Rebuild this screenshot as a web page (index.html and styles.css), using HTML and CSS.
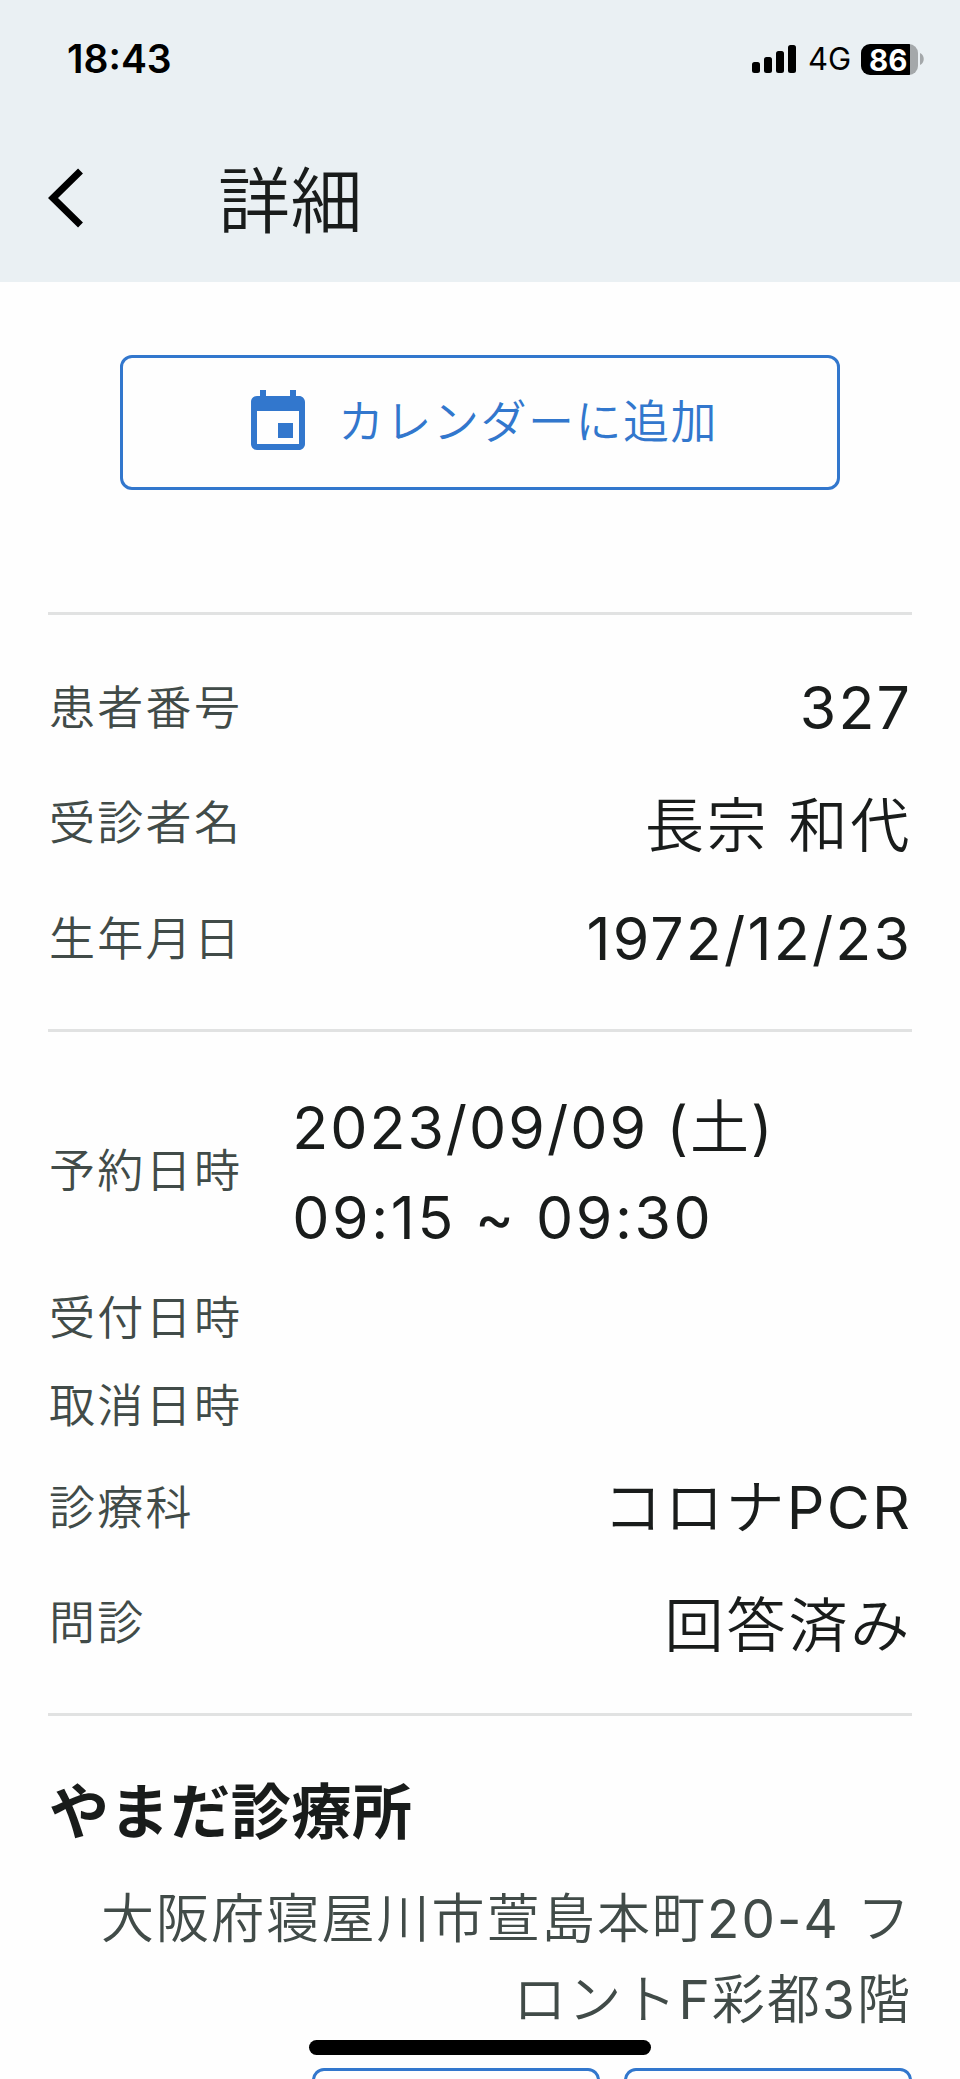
FILE: index.html
```
<!DOCTYPE html>
<html lang="ja">

<head>
     <meta charset="UTF-8">
     <meta name="viewport" content="width=device-width, initial-scale=1.0">
     <title>詳細</title>
     <link rel="stylesheet" href="styles.css">
</head>

<body>
     <div class="screen">
          <header class="header">
               <div class="status-bar">
                    <span class="time">18:43</span>
                    <div class="status-icons">
                         <svg class="signal" width="44" height="28" viewBox="0 0 44 28">
                              <rect x="0" y="17" width="8" height="11" rx="2.5" />
                              <rect x="12" y="12" width="8" height="16" rx="2.5" />
                              <rect x="24" y="6" width="8" height="22" rx="2.5" />
                              <rect x="36" y="0" width="8" height="28" rx="2.5" />
                         </svg>
                         <span class="network">4G</span>
                         <div class="battery"><span>86</span></div>
                         <svg class="battery-tip" width="4" height="12" viewBox="0 0 4 12">
                              <path d="M0 0c5 2 5 10 0 12z" />
                         </svg>
                    </div>
               </div>
               <div class="app-bar">
                    <svg class="back" width="36" height="60" viewBox="0 0 36 60">
                         <path d="M32.5 3L5 30l27.500 27" />
                    </svg>
                    <h1>詳細</h1>
               </div>
          </header>

          <main>
               <button class="calendar-btn">
                    <svg width="72" height="72" viewBox="0 0 24 24">
                         <path d="M17 12h-5v5h5v-5zM16 1v2H8V1H6v2H5c-1.110 0-1.990.9-1.990 2L3 19c0 1.100.890 2 2 2h14c1.100 0 2-.9 2-2V5c0-1.100-.9-2-2-2h-1V1h-2zm3 18H5V8h14v11z" />
                    </svg>
                    <span>カレンダーに追加</span>
               </button>

               <section class="patient">
                    <div class="row">
                         <span class="label">患者番号</span>
                         <span class="value num">327</span>
                    </div>
                    <div class="row">
                         <span class="label">受診者名</span>
                         <span class="value kanji">長宗<span class="num"> </span>和代</span>
                    </div>
                    <div class="row">
                         <span class="label">生年月日</span>
                         <span class="value num">1972/12/23</span>
                    </div>
               </section>

               <section class="visit">
                    <div class="row row-date">
                         <span class="label">予約日時</span>
                         <div class="value date">
                              <div class="day"><span class="num">2023/09/09 (</span>土<span class="num">)</span></div>
                              <div class="num">09:15 ~ 09:30</div>
                         </div>
                    </div>
                    <div class="row row-small">
                         <span class="label">受付日時</span>
                    </div>
                    <div class="row row-small">
                         <span class="label">取消日時</span>
                    </div>
                    <div class="row">
                         <span class="label">診療科</span>
                         <span class="value">コロナ<span class="num">PCR</span></span>
                    </div>
                    <div class="row">
                         <span class="label">問診</span>
                         <span class="value kanji">回答済み</span>
                    </div>
               </section>

               <section class="clinic">
                    <h2>やまだ診療所</h2>
                    <p class="address">大阪府寝屋川市萱島本町<span class="num">20-4 </span>フ<br>ロント<span class="num">F</span>彩都<span class="num">3</span>階</p>
                    <div class="clinic-actions">
                         <button></button>
                         <button></button>
                    </div>
               </section>
          </main>

          <div class="home-indicator"></div>
     </div>
</body>

</html>
```
FILE: styles.css
```
/* Base styles */
* {
     box-sizing: border-box;
}

body {
     margin: 0;
     background-color: #fefefe;
     color: #191c1b;
     font-family: Inter, "Noto Sans CJK JP", sans-serif;
     font-weight: 350;
}

.screen {
     position: relative;
     width: 960px;
     height: 2079px;
     overflow: hidden;
}

/* Latin letters and digits */
.num {
     font-weight: 400;
}

/* Status bar + title */
.header {
     height: 282px;
     background-color: #eaf0f3;
}

.status-bar {
     display: flex;
     justify-content: space-between;
     height: 118px;
     padding: 0 36px 0 67px;
     color: #000000;
     line-height: 118px;
}

.time {
     font-size: 39px;
     font-weight: 600;
}

.status-icons {
     display: flex;
     align-items: center;
}

.network {
     margin-left: 12px;
     width: 53px;
     font-size: 31px;
     font-weight: 400;
}

.battery {
     width: 57px;
     height: 31px;
     border-radius: 9px;
     background: linear-gradient(to right, #000000 49px, #a4a8aa 49px);
     color: #ffffff;
     font-size: 29.5px;
     font-weight: 700;
     line-height: 32px;
     padding-left: 8px;
}

.battery-tip {
     margin-left: 2px;
     fill: #a4a8aa;
}

.app-bar {
     display: flex;
     align-items: center;
     height: 160px;
     padding-left: 48px;
}

.back {
     fill: none;
     stroke: #000000;
     stroke-width: 7;
}

.app-bar h1 {
     margin: 0 0 0 134px;
     padding-top: 5px;
     font-size: 72px;
     font-weight: 350;
     letter-spacing: 0.5px;
     line-height: 100px;
}

/* Calendar button */
.calendar-btn {
     display: flex;
     justify-content: center;
     align-items: center;
     gap: 24px;
     width: 720px;
     height: 135px;
     margin: 73px auto 122px;
     padding: 0;
     border: 3px solid #3277cd;
     border-radius: 12px;
     background: none;
     color: #3277cd;
     font-family: inherit;
     font-size: 46px;
     font-weight: 350;
     letter-spacing: 1.5px;
}

.calendar-btn span {
     padding-bottom: 9px;
}

.calendar-btn svg {
     fill: #3277cd;
}

/* Sections */
section {
     margin: 0 48px;
     border-top: 3px solid #e1e2e2;
}

.patient {
     height: 417px;
     padding-top: 34px;
}

.visit {
     height: 684px;
     padding-top: 35px;
}

.row {
     display: flex;
     align-items: center;
     justify-content: space-between;
     height: 115.5px;
     padding: 0 2px 0 1px;
}

.row-date {
     height: 206px;
     justify-content: flex-start;
}

.row-small {
     height: 88px;
}

.label {
     padding-bottom: 6px;
     color: #414b48;
     font-size: 46px;
     letter-spacing: 2.3px;
}

.value {
     padding-top: 3px;
     font-size: 59px;
     letter-spacing: 2.2px;
     line-height: 90px;
     margin-right: -2.2px;
}

.kanji {
     padding-top: 7px;
     letter-spacing: 2.9px;
}

.date {
     padding-top: 6px;
     margin-left: 50px;
     letter-spacing: 2.6px;
}

.day {
     letter-spacing: 2px;
}

/* Clinic info */
.clinic h2 {
     margin: 46px 0 0;
     padding-left: 1px;
     font-size: 60px;
     font-weight: 700;
     letter-spacing: 0.6px;
     line-height: 100px;
}

.address {
     margin: 17px 0 0;
     color: #414b48;
     font-size: 53px;
     letter-spacing: 2.1px;
     line-height: 81px;
     text-align: right;
}

.clinic-actions {
     display: flex;
     justify-content: flex-end;
     gap: 24px;
     margin-top: 27px;
}

.clinic-actions button {
     width: 288px;
     height: 120px;
     border: 3px solid #3277cd;
     border-radius: 12px;
     background: none;
}

/* iOS home indicator */
.home-indicator {
     position: absolute;
     left: 309px;
     bottom: 24px;
     width: 342px;
     height: 15px;
     border-radius: 8px;
     background-color: #000000;
}
```
